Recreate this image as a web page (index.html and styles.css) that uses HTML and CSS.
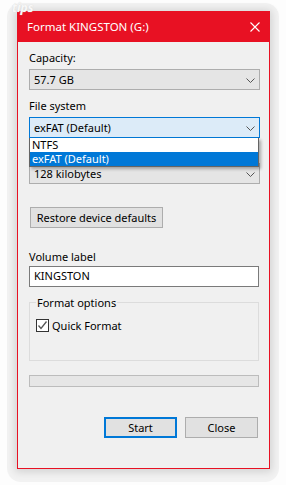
FILE: index.html
```html
<!DOCTYPE html>
<html lang="en">
<head>
    <meta charset="UTF-8">
    <meta name="viewport" content="width=device-width, initial-scale=1.0">
    <title>Format KINGSTON (G:)</title>
    <link rel="stylesheet" href="styles.css">
</head>
<body>
    <div class="frame">
        <span class="watermark">tips</span>

        <div class="window">
            <div class="titlebar">
                <span class="title">Format KINGSTON (G:)</span>
                <svg class="close-x" width="10" height="10" viewBox="0 0 10 10">
                    <path d="M0.5 0.5 L9.5 9.5 M9.5 0.5 L0.5 9.5" stroke="#fff" stroke-width="1.1" fill="none"/>
                </svg>
            </div>

            <div class="content">
                <div class="label first">Capacity:</div>
                <div class="combo">
                    <span>57.7 GB</span>
                    <svg class="chev" width="9" height="5" viewBox="0 0 9 5"><polyline points="0.5,0.5 4.5,4.5 8.5,0.5" fill="none" stroke="#555" stroke-width="1"/></svg>
                </div>

                <div class="label">File system</div>
                <div class="combo-wrap">
                    <div class="combo open">
                        <span>exFAT (Default)</span>
                        <svg class="chev" width="9" height="5" viewBox="0 0 9 5"><polyline points="0.5,0.5 4.5,4.5 8.5,0.5" fill="none" stroke="#555" stroke-width="1"/></svg>
                    </div>
                    <!-- dropdown list over the next field -->
                    <ul class="dropdown">
                        <li>NTFS</li>
                        <li class="selected">exFAT (Default)</li>
                    </ul>
                </div>

                <!-- covered by the open list -->
                <div class="label tight covered">Allocation unit size</div>
                <div class="combo">
                    <span>128 kilobytes</span>
                    <svg class="chev" width="9" height="5" viewBox="0 0 9 5"><polyline points="0.5,0.5 4.5,4.5 8.5,0.5" fill="none" stroke="#555" stroke-width="1"/></svg>
                </div>

                <button class="btn restore">Restore device defaults</button>

                <div class="label volume">Volume label</div>
                <input type="text" class="textbox" value="KINGSTON">

                <fieldset class="options">
                    <legend>Format options</legend>
                    <label class="check-row">
                        <span class="checkbox">
                            <svg width="11" height="11" viewBox="0 0 11 11"><polyline points="1.5,5.5 4,8.5 9.5,1.5" fill="none" stroke="#555" stroke-width="1.3"/></svg>
                        </span>
                        Quick Format
                    </label>
                </fieldset>

                <div class="progress"></div>

                <div class="actions">
                    <button class="btn start">Start</button>
                    <button class="btn">Close</button>
                </div>
            </div>
        </div>
    </div>
</body>
</html>
```
FILE: styles.css
```css
body {
    margin: 0;
    background: #fdfdfd;
    font-family: 'Noto Sans', sans-serif;
    font-size: 11px;
    line-height: 15px;
    color: #000;
}
.frame {
    position: relative;
    box-sizing: border-box;
    width: 272px;
    height: 479px;
    margin: 3px 0 0 7px;
    padding: 8px 0 0 10px;
    border-radius: 14px;
    background: #f2f2f2;
}
.watermark {
    position: absolute;
    left: 5px;
    top: -2px;
    font-size: 12px;
    line-height: 14px;
    font-weight: bold;
    font-style: italic;
    color: #f8f8f8;
    text-shadow: 0 0 1px #d0d0d0;
}
.window {
    box-sizing: border-box;
    width: 253px;
    height: 458px;
    border: 1px solid #e81123;
    border-top: none;
    background: #f0f0f0;
    box-shadow: 0 1px 8px 2px rgba(0, 0, 0, 0.13);
}
.titlebar {
    display: flex;
    align-items: center;
    justify-content: space-between;
    height: 31px;
    margin: 0 -1px;
    padding: 0 10px 0 10px;
    background: #e81123;
    color: #fff;
    font-size: 11.5px;
}
.close-x { margin-top: 1px; }
.content {
    padding: 0 9px 0 11px;
}
.label { margin-top: 8px; }
.label.tight { margin-top: 6px; }
.label.covered { visibility: hidden; }
.label.volume { margin-top: 21px; }
.combo {
    box-sizing: border-box;
    display: flex;
    align-items: center;
    justify-content: space-between;
    height: 21px;
    margin-top: 4px;
    padding: 0 4px 0 4px;
    background: #e5e5e5;
    border: 1px solid #adadad;
}
.combo.open {
    background: #dcebf8;
    border-color: #0078d7;
}
.chev { margin-top: 1px; }
.combo-wrap { position: relative; }
.dropdown {
    position: absolute;
    top: 100%;
    left: 0;
    z-index: 2;
    box-sizing: border-box;
    width: 230px;
    margin: 0;
    padding: 0;
    list-style: none;
    background: #fff;
    border: 1px solid #646464;
    border-top: none;
    box-shadow: 2px 2px 3px rgba(0, 0, 0, 0.3);
}
.dropdown li {
    height: 14px;
    line-height: 14px;
    padding-left: 2px;
}
.dropdown li.selected {
    background: #0078d7;
    color: #fff;
}
.btn {
    box-sizing: border-box;
    height: 21px;
    padding: 0;
    font-family: inherit;
    font-size: 11px;
    line-height: 15px;
    color: #000;
    background: #e1e1e1;
    border: 1px solid #adadad;
}
.restore {
    display: block;
    width: 133px;
    margin: 23px 0 0 1px;
}
.textbox {
    box-sizing: border-box;
    display: block;
    width: 230px;
    height: 21px;
    margin: 2px 0 0 0;
    padding: 0 0 2px 4px;
    font-family: inherit;
    font-size: 11px;
    color: #000;
    background: #fff;
    border: 1px solid #7a7a7a;
    outline: none;
}
.options {
    box-sizing: border-box;
    width: 230px;
    height: 66px;
    margin: 8px 0 0 0;
    padding: 0 6px;
    border: 1px solid #dcdcdc;
}
.options legend {
    padding: 0 1px;
    line-height: 15px;
}
.check-row {
    display: flex;
    align-items: center;
    gap: 3px;
    margin-top: 8px;
}
.checkbox {
    box-sizing: border-box;
    display: flex;
    align-items: center;
    justify-content: center;
    width: 13px;
    height: 13px;
    background: #fff;
    border: 1px solid #333;
}
.progress {
    box-sizing: border-box;
    width: 230px;
    height: 12px;
    margin-top: 14px;
    background: #e6e6e6;
    border: 1px solid #bcbcbc;
}
.actions {
    display: flex;
    justify-content: flex-end;
    gap: 8px;
    margin: 30px 2px 0 0;
}
.actions .btn { width: 73px; }
.start { border: 2px solid #0078d7; }
```
